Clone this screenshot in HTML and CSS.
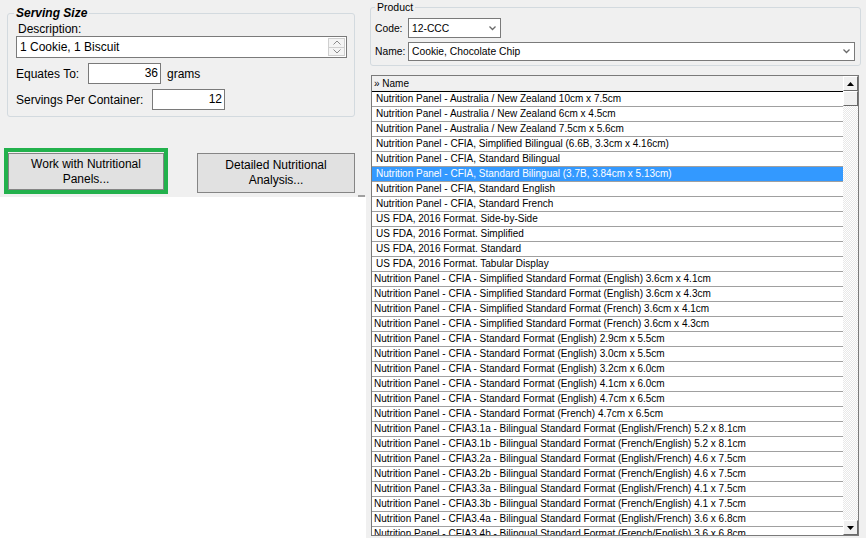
FILE: index.html
```html
<!DOCTYPE html>
<html lang="en">
  <head>
    <meta charset="UTF-8" />
    <title>Nutrition Panels</title>
    <link rel="stylesheet" href="styles.css">
  </head>
  <body>
    <div class="window">
      <div class="left">
        <div class="top-panel">
          <fieldset class="group serving">
            <legend>Serving Size</legend>
            <div class="desc-label">Description:</div>
            <div class="text-box desc">
              <span>1 Cookie, 1 Biscuit</span>
              <div class="spinner">
                <span class="spin">
                  <svg width="8" height="5" viewBox="0 0 8 5"><path d="M0.5 4.5 L4 1 L7.5 4.5" fill="none" stroke="#8a8a8a" stroke-width="1"/></svg>
                </span>
                <span class="spin">
                  <svg width="8" height="5" viewBox="0 0 8 5"><path d="M0.5 0.5 L4 4 L7.5 0.5" fill="none" stroke="#8a8a8a" stroke-width="1"/></svg>
                </span>
              </div>
            </div>
            <div class="field-row">
              <span class="lbl lbl-eq">Equates To:</span>
              <div class="text-box num">36</div>
              <span class="unit">grams</span>
            </div>
            <div class="field-row">
              <span class="lbl lbl-serv">Servings Per Container:</span>
              <div class="text-box num">12</div>
            </div>
          </fieldset>
          <div class="actions">
            <div class="highlight">
              <button class="btn">Work with Nutritional<br>Panels...</button>
            </div>
            <button class="btn btn-analysis">Detailed Nutritional<br>Analysis...</button>
            <span class="grip"></span>
          </div>
        </div>
      </div>

      <div class="right">
        <fieldset class="group product">
          <legend>Product</legend>
          <div class="prod-row">
            <span class="prod-label">Code:</span>
            <div class="select code">
              <span>12-CCC</span>
              <svg width="7" height="5" viewBox="0 0 7 5"><path d="M0.5 0.5 L3.5 3.5 L6.5 0.5" fill="none" stroke="#6a6a6a" stroke-width="1.3"/></svg>
            </div>
          </div>
          <div class="prod-row second">
            <span class="prod-label">Name:</span>
            <div class="select name">
              <span>Cookie, Chocolate Chip</span>
              <svg width="7" height="5" viewBox="0 0 7 5"><path d="M0.5 0.5 L3.5 3.5 L6.5 0.5" fill="none" stroke="#6a6a6a" stroke-width="1.3"/></svg>
            </div>
          </div>
        </fieldset>

        <div class="list">
          <div class="list-main">
            <div class="list-head">&raquo; Name</div>
            <div class="row indent">Nutrition Panel - Australia / New Zealand 10cm x 7.5cm</div>
            <div class="row indent">Nutrition Panel - Australia / New Zealand 6cm x 4.5cm</div>
            <div class="row indent">Nutrition Panel - Australia / New Zealand 7.5cm x 5.6cm</div>
            <div class="row indent">Nutrition Panel - CFIA, Simplified Bilingual (6.6B, 3.3cm x 4.16cm)</div>
            <div class="row indent">Nutrition Panel - CFIA, Standard Bilingual</div>
            <div class="row indent selected">Nutrition Panel - CFIA, Standard Bilingual (3.7B, 3.84cm x 5.13cm)</div>
            <div class="row indent">Nutrition Panel - CFIA, Standard English</div>
            <div class="row indent">Nutrition Panel - CFIA, Standard French</div>
            <div class="row indent">US FDA, 2016 Format. Side-by-Side</div>
            <div class="row indent">US FDA, 2016 Format. Simplified</div>
            <div class="row indent">US FDA, 2016 Format. Standard</div>
            <div class="row indent">US FDA, 2016 Format. Tabular Display</div>
            <div class="row">Nutrition Panel - CFIA - Simplified Standard Format (English) 3.6cm x 4.1cm</div>
            <div class="row">Nutrition Panel - CFIA - Simplified Standard Format (English) 3.6cm x 4.3cm</div>
            <div class="row">Nutrition Panel - CFIA - Simplified Standard Format (French) 3.6cm x 4.1cm</div>
            <div class="row">Nutrition Panel - CFIA - Simplified Standard Format (French) 3.6cm x 4.3cm</div>
            <div class="row">Nutrition Panel - CFIA - Standard Format (English) 2.9cm x 5.5cm</div>
            <div class="row">Nutrition Panel - CFIA - Standard Format (English) 3.0cm x 5.5cm</div>
            <div class="row">Nutrition Panel - CFIA - Standard Format (English) 3.2cm x 6.0cm</div>
            <div class="row">Nutrition Panel - CFIA - Standard Format (English) 4.1cm x 6.0cm</div>
            <div class="row">Nutrition Panel - CFIA - Standard Format (English) 4.7cm x 6.5cm</div>
            <div class="row">Nutrition Panel - CFIA - Standard Format (French) 4.7cm x 6.5cm</div>
            <div class="row">Nutrition Panel - CFIA3.1a - Bilingual Standard Format (English/French) 5.2 x 8.1cm</div>
            <div class="row">Nutrition Panel - CFIA3.1b - Bilingual Standard Format (French/English) 5.2 x 8.1cm</div>
            <div class="row">Nutrition Panel - CFIA3.2a - Bilingual Standard Format (English/French) 4.6 x 7.5cm</div>
            <div class="row">Nutrition Panel - CFIA3.2b - Bilingual Standard Format (French/English) 4.6 x 7.5cm</div>
            <div class="row">Nutrition Panel - CFIA3.3a - Bilingual Standard Format (English/French) 4.1 x 7.5cm</div>
            <div class="row">Nutrition Panel - CFIA3.3b - Bilingual Standard Format (French/English) 4.1 x 7.5cm</div>
            <div class="row">Nutrition Panel - CFIA3.4a - Bilingual Standard Format (English/French) 3.6 x 6.8cm</div>
            <div class="row">Nutrition Panel - CFIA3.4b - Bilingual Standard Format (French/English) 3.6 x 6.8cm</div>
          </div>
          <div class="scrollbar">
            <div class="sb-btn">
              <svg width="7" height="4" viewBox="0 0 7 4"><path d="M0 4 L3.5 0 L7 4 Z" fill="#000"/></svg>
            </div>
            <div class="sb-btn sb-thumb"></div>
            <div class="sb-track"></div>
            <div class="sb-btn">
              <svg width="7" height="4" viewBox="0 0 7 4"><path d="M0 0 L3.5 4 L7 0 Z" fill="#000"/></svg>
            </div>
          </div>
        </div>
      </div>
    </div>
  </body>
</html>
```

FILE: styles.css
```css
* {
  box-sizing: border-box;
}
body {
  margin: 0;
  background-color: #f0f0f0;
  font-family: "Liberation Sans", Arial, sans-serif;
  color: #000;
}
.window {
  display: flex;
  width: 866px;
  height: 538px;
  overflow: hidden;
}

/* left side */
.left {
  width: 366px;
  background-color: #fff;
}
.top-panel {
  height: 197px;
  background-color: #f0f0f0;
  padding-top: 6px;
}
.group {
  margin: 0;
  border: 1px solid #d3dadf;
  border-radius: 3px;
  min-width: 0;
}
.serving {
  margin-left: 7px;
  width: 348px;
  padding: 2px 7px 6px 8px;
}
.serving legend {
  font: italic bold 12px/14px "Liberation Sans", Arial, sans-serif;
  padding: 0 2px;
  margin-left: -2px;
}
.desc-label {
  font-size: 12px;
  line-height: 14px;
  margin-left: 2px;
}
.text-box {
  background-color: #fff;
  border: 1px solid #7a7a7a;
  font-size: 12px;
}
.desc {
  height: 22px;
  display: flex;
  align-items: center;
  justify-content: space-between;
  padding: 0 1px 0 3px;
}
.spinner {
  display: flex;
  flex-direction: column;
  width: 17px;
  height: 18px;
}
.spin {
  flex: 1;
  display: flex;
  align-items: center;
  justify-content: center;
  background-color: #f4f4f4;
  border: 1px solid #cfcfcf;
}
.spin + .spin {
  border-top: none;
}
.field-row {
  display: flex;
  align-items: center;
  height: 21px;
  margin-top: 5px;
  font-size: 12px;
}
.lbl-eq {
  width: 72px;
}
.lbl-serv {
  width: 136px;
}
.num {
  width: 73px;
  height: 21px;
  text-align: right;
  padding-right: 2px;
  line-height: 19px;
}
.unit {
  margin-left: 6px;
}
.actions {
  display: flex;
  align-items: flex-start;
  padding-left: 4px;
  margin-top: 31px;
}
.highlight {
  border: 4px solid #22b14c;
  padding-top: 1px;
}
.btn {
  display: block;
  width: 156px;
  height: 37px;
  padding: 0;
  background-color: #e1e1e1;
  border: 1px solid #858585;
  font: 12px/15px "Liberation Sans", Arial, sans-serif;
  color: #000;
}
.btn-analysis {
  width: 158px;
  height: 40px;
  margin: 5px 0 0 29px;
}
.grip {
  width: 7px;
  height: 2px;
  background-color: #a0a0a0;
  margin: 47px 0 0 3px;
}

/* right side */
.right {
  flex: 1;
  padding-left: 4px;
}
.product {
  margin-top: 1px;
  width: 491px;
  padding: 5px 4px 4px 4px;
}
.product legend {
  font-size: 10.5px;
  line-height: 12px;
  padding: 0 2px;
}
.prod-row {
  display: flex;
  align-items: center;
  font-size: 10.3px;
}
.prod-row.second {
  margin-top: 4px;
}
.prod-label {
  width: 33px;
}
.select {
  display: flex;
  align-items: center;
  justify-content: space-between;
  height: 20px;
  padding: 0 4px 0 3px;
  background-color: #fff;
  border: 1px solid #7a7a7a;
}
.code {
  width: 93px;
}
.name {
  width: 447px;
  height: 19px;
}

.list {
  display: flex;
  width: 488px;
  height: 461px;
  margin: 9px 0 0 1px;
  background-color: #fff;
  border: 1px solid #7a7a7a;
}
.list-main {
  flex: 1;
  overflow: hidden;
}
.list-head {
  height: 16px;
  padding-left: 2px;
  background-color: #f0f0f0;
  border-bottom: 1px solid #000;
  font-size: 10px;
  line-height: 15px;
}
.row {
  height: 15px;
  padding-left: 2px;
  border-bottom: 1px solid #a0a0a0;
  font-size: 10px;
  line-height: 14px;
  white-space: nowrap;
}
.row.indent {
  padding-left: 4px;
}
.row.selected {
  background-color: #3399ff;
  color: #fff;
}
.scrollbar {
  display: flex;
  flex-direction: column;
  width: 15px;
  background: repeating-conic-gradient(#fff 0 25%, #e8e8e8 0 50%) 0 0 / 2px 2px;
}
.sb-btn {
  height: 15px;
  display: flex;
  align-items: center;
  justify-content: center;
  background-color: #f0f0f0;
  border: 1px solid;
  border-color: #fff #696969 #696969 #fff;
}
.sb-track {
  flex: 1;
}
```
